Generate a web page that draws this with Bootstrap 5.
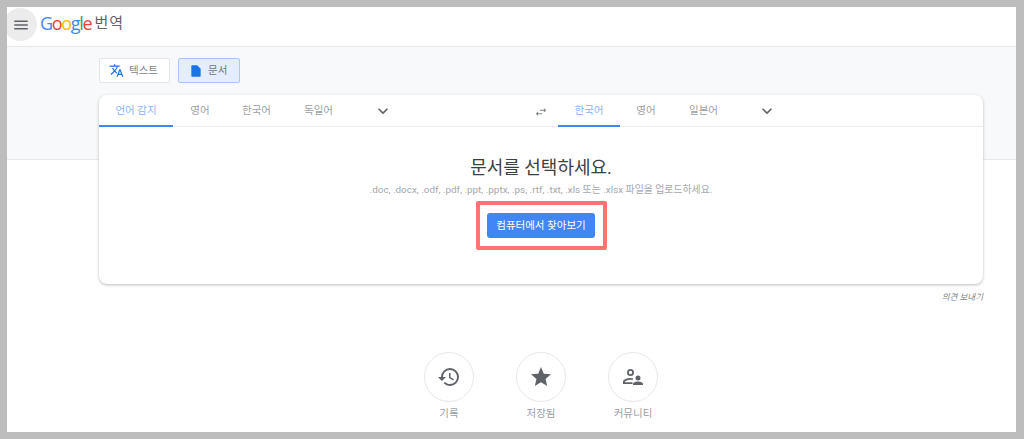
<!DOCTYPE html>
<html lang="ko">

<head>
    <meta charset="UTF-8">
    <title>Google 번역</title>
    <meta name="viewport" content="width=device-width, initial-scale=1">
    <link href="https://cdn.jsdelivr.net/npm/bootstrap@5.3.0/dist/css/bootstrap.min.css" rel="stylesheet">
    <style>
        html, body { height: 439px; overflow: hidden; }
        body {
            background: #bdbdbd;
            padding: 7px 8px 7px 7px;
            font-family: Roboto, "Noto Sans CJK KR", sans-serif;
            color: #3c4043;
        }
        .frame { background: #fff; height: 425px; overflow: hidden; }
        .top-bar { height: 40px; border-bottom: 1px solid #e8e8e8; }
        .menu-btn {
            width: 33px; height: 33px; margin-top: 1px; margin-left: -3px;
            background: #ececec; border-radius: 50%;
        }
        .logo-wrap { height: 100%; padding-bottom: 6px; }
        .g-logo { font-family: "Open Sans", sans-serif; font-size: 18px; letter-spacing: -1.3px; margin-left: 3px; font-weight: 500; }
        .g-title { font-size: 15px; color: #5f6368; margin-left: 3px; letter-spacing: 1px; }
        .band { height: 113px; background: #f8f9fa; border-bottom: 1px solid #e8e8e8; padding: 11px 0 0 92px; }
        .mode-btn {
            width: 71px; height: 25px; font-size: 10.5px; background: #fff; color: #80868b;
            border: 1px solid #e3e5e8; border-radius: 2px; padding: 0 0 0 9px; gap: 5px;
        }
        .mode-on { width: 62px; background: #e3edfd; border-color: #a6c8fb; color: #70757a; padding-left: 10px; }
        .main-card {
            width: 884px; height: 189px; margin-top: 12px; background: #fff;
            border-radius: 8px; box-shadow: 0 1px 3px rgba(60, 64, 67, .35);
        }
        .lang-row { height: 32px; border-bottom: 1px solid #ececec; }
        .lang-half { width: 50%; }
        .lang-item { height: 32px; font-size: 10.5px; color: #9aa0a6; text-align: center; line-height: 31px; }
        .lang-active { color: #8ab4f8; border-bottom: 2px solid #4285f4; }
        .w-a { width: 74px; }
        .w-b { width: 54px; }
        .w-c { width: 59px; }
        .w-d { width: 65px; }
        .w-f { width: 62px; }
        .w-g { width: 52px; }
        .w-e { width: 63px; }
        .swap { width: 14px; margin: 10px 10px 0 -7px; }
        .chev { margin: 6px 0 0 22px; }
        .doc-title { font-size: 18px; color: #3c4043; margin: 28px 0 0; line-height: 26px; }
        .doc-sub { font-size: 9.9px; color: #a3a8ad; margin: 2px 0 0; line-height: 14px; }
        .red-box {
            width: 131px; height: 49px; margin-top: 4px;
            border: 4px solid #ff7373; border-radius: 2px;
        }
        .find-btn {
            width: 108px; height: 25px; padding: 0; background: #4285f4; border: 0;
            border-radius: 3px; color: #fff; font-size: 10.5px;
        }
        .send-note { width: 884px; text-align: right; font-size: 8.5px; font-style: italic; color: #80868b; margin-top: 7px; line-height: 12px; }
        .foot-row { margin-top: 192px; gap: 42px; padding-left: 59px; }
        .foot-item { width: 50px; font-size: 10.5px; color: #9aa0a6; }
        .foot-circle {
            width: 50px; height: 50px; border: 1px solid #e8e8e8; border-radius: 50%;
            margin-bottom: 4px;
        }
    </style>
</head>

<body>
    <div class="frame">
        <div class="top-bar d-flex align-items-start">
            <div class="menu-btn d-flex align-items-center justify-content-center">
                <svg width="18" height="18" viewBox="0 0 24 24" fill="#5f6368"><path d="M3 18h18v-2H3v2zm0-5h18v-2H3v2zm0-7v2h18V6H3z"/></svg>
            </div>
            <div class="logo-wrap d-flex align-items-center">
                <span class="g-logo"><span style="color:#4285f4">G</span><span style="color:#ea4335">o</span><span style="color:#fbbc05">o</span><span style="color:#4285f4">g</span><span style="color:#34a853">l</span><span style="color:#ea4335">e</span></span>
                <span class="g-title">번역</span>
            </div>
        </div>

        <div class="band">
            <div class="d-flex gap-2">
                <div class="mode-btn d-flex align-items-center">
                    <svg width="15" height="15" viewBox="0 0 24 24" fill="#1a73e8"><path d="M12.87 15.07l-2.54-2.51.03-.03A17.52 17.52 0 0 0 14.07 6H17V4h-7V2H8v2H1v2h11.17C11.5 7.92 10.44 9.75 9 11.35 8.07 10.32 7.3 9.19 6.69 8h-2c.73 1.63 1.73 3.17 2.98 4.56l-5.09 5.02L4 19l5-5 3.11 3.11.76-2.04zM18.5 10h-2L12 22h2l1.12-3h4.75L21 22h2l-4.5-12zm-2.62 7l1.62-4.33L19.12 17h-3.24z"/></svg>
                    <span>텍스트</span>
                </div>
                <div class="mode-btn mode-on d-flex align-items-center">
                    <svg width="14" height="14" viewBox="0 0 24 24" fill="#1a73e8"><path d="M14 2H6c-1.1 0-2 .9-2 2v16c0 1.1.9 2 2 2h12c1.1 0 2-.9 2-2V8l-6-6z"/></svg>
                    <span>문서</span>
                </div>
            </div>

            <div class="main-card">
                <div class="lang-row d-flex">
                    <div class="lang-half d-flex align-items-start">
                        <div class="lang-item lang-active w-a">언어 감지</div>
                        <div class="lang-item w-b">영어</div>
                        <div class="lang-item w-c">한국어</div>
                        <div class="lang-item w-d">독일어</div>
                        <svg class="chev" width="20" height="20" viewBox="0 0 24 24" fill="#5f6368"><path d="M7.41 8.59L12 13.17l4.59-4.58L18 10l-6 6-6-6z"/></svg>
                    </div>
                    <div class="lang-half d-flex align-items-start">
                        <svg class="swap" width="14" height="14" viewBox="0 0 24 24" fill="#80868b"><path d="M6.99 11L3 15l3.99 4v-3H14v-2H6.99v-3zM21 9l-3.99-4v3H10v2h7.01v3L21 9z"/></svg>
                        <div class="lang-item lang-active w-f">한국어</div>
                        <div class="lang-item w-g">영어</div>
                        <div class="lang-item w-e">일본어</div>
                        <svg class="chev" width="20" height="20" viewBox="0 0 24 24" fill="#5f6368"><path d="M7.41 8.59L12 13.17l4.59-4.58L18 10l-6 6-6-6z"/></svg>
                    </div>
                </div>
                <div class="d-flex flex-column align-items-center">
                    <h1 class="doc-title fw-normal">문서를 선택하세요.</h1>
                    <p class="doc-sub">.doc, .docx, .odf, .pdf, .ppt, .pptx, .ps, .rtf, .txt, .xls 또는 .xlsx 파일을 업로드하세요.</p>
                    <div class="red-box d-flex align-items-center justify-content-center">
                        <button class="btn find-btn">컴퓨터에서 찾아보기</button>
                    </div>
                </div>
            </div>
            <div class="send-note">의견 보내기</div>
        </div>

        <div class="foot-row d-flex justify-content-center">
            <div class="foot-item d-flex flex-column align-items-center">
                <div class="foot-circle d-flex align-items-center justify-content-center flex-shrink-0">
                    <svg width="24" height="24" viewBox="0 0 24 24" fill="#5f6368"><path d="M13 3a9 9 0 0 0-9 9H1l3.89 3.89.07.14L9 12H6c0-3.87 3.13-7 7-7s7 3.13 7 7-3.13 7-7 7c-1.93 0-3.68-.79-4.94-2.06l-1.42 1.42A8.954 8.954 0 0 0 13 21a9 9 0 0 0 0-18zm-1 5v5l4.28 2.54.72-1.21-3.5-2.08V8H12z"/></svg>
                </div>
                <span>기록</span>
            </div>
            <div class="foot-item d-flex flex-column align-items-center">
                <div class="foot-circle d-flex align-items-center justify-content-center flex-shrink-0">
                    <svg width="24" height="24" viewBox="0 0 24 24" fill="#5f6368"><path d="M12 17.27L18.18 21l-1.64-7.03L22 9.24l-7.19-.61L12 2 9.19 8.63 2 9.24l5.46 4.73L5.82 21z"/></svg>
                </div>
                <span class="text-nowrap">저장됨</span>
            </div>
            <div class="foot-item d-flex flex-column align-items-center">
                <div class="foot-circle d-flex align-items-center justify-content-center flex-shrink-0">
                    <svg width="24" height="24" viewBox="0 0 24 24" fill="#5f6368"><path d="M9.500 4a3.500 3.500 0 1 0 0 7 3.500 3.500 0 0 0 0-7zm0 1.800a1.700 1.700 0 1 1 0 3.400 1.700 1.700 0 0 1 0-3.400zM9.500 13C6.500 13 2 14.400 2 17v2h9.500v-1.800H3.800V17c0-.8 3-2.200 5.700-2.200.6 0 1.300.1 1.900.2l1.100-1.500c-1-.3-2-.5-3-.5zM17 10.500a2.500 2.500 0 1 0 0 5 2.500 2.500 0 0 0 0-5zM17 16.500c-2 0-5 .9-5 2.500v1h10v-1c0-1.600-3-2.500-5-2.500z"/></svg>
                </div>
                <span class="text-nowrap">커뮤니티</span>
            </div>
        </div>
    </div>

    <script src="https://cdn.jsdelivr.net/npm/bootstrap@5.3.0/dist/js/bootstrap.bundle.min.js"></script>
</body>

</html>
